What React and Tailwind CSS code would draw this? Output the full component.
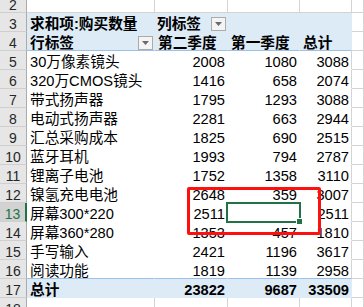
import React from "react";

const rows = [
  { n: 5, a: "30万像素镜头", b: "2008", c: "1080", d: "3088" },
  { n: 6, a: "320万CMOS镜头", b: "1416", c: "658", d: "2074" },
  { n: 7, a: "带式扬声器", b: "1795", c: "1293", d: "3088" },
  { n: 8, a: "电动式扬声器", b: "2281", c: "663", d: "2944" },
  { n: 9, a: "汇总采购成本", b: "1825", c: "690", d: "2515" },
  { n: 10, a: "蓝牙耳机", b: "1993", c: "794", d: "2787" },
  { n: 11, a: "锂离子电池", b: "1752", c: "1358", d: "3110" },
  { n: 12, a: "镍氢充电电池", b: "2648", c: "359", d: "3007" },
  { n: 13, a: "屏幕300*220", b: "2511", c: "", d: "2511" },
  { n: 14, a: "屏幕360*280", b: "1353", c: "457", d: "1810" },
  { n: 15, a: "手写输入", b: "2421", c: "1196", d: "3617" },
  { n: 16, a: "阅读功能", b: "1819", c: "1139", d: "2958" },
];

function RowHead({ n, selected }) {
  return (
    <div
      className={
        "w-[27px] h-[19px] shrink-0 border-b border-b-[#CFCFCF] text-center text-[14px] leading-[18px] pt-[2px] " +
        (selected
          ? "bg-[#D2D2D2] border-r-2 border-r-[#217346] text-[#217346]"
          : "bg-[#E6E6E6] border-r border-r-[#ABABAB] text-[#262626]")
      }
    >
      {n}
    </div>
  );
}

function Dropdown() {
  return (
    <div className="self-end w-[15px] h-[14px] border border-[#ABABAB] bg-[#F4F4F4] flex items-center justify-center">
      <svg width="7" height="4" viewBox="0 0 7 4">
        <path d="M0 0 H7 L3.5 4 Z" fill="#6A6A6A" />
      </svg>
    </div>
  );
}

const cellBase = "h-[19px] shrink-0 border-r border-b leading-[18px] pt-[2px] whitespace-nowrap";

function GridRow({ n }) {
  const g = "bg-white border-[#D4D4D4]";
  return (
    <div className="flex">
      <RowHead n={n} />
      <div className={`${cellBase} ${g} w-[128px]`} />
      <div className={`${cellBase} ${g} w-[73px]`} />
      <div className={`${cellBase} ${g} w-[72px]`} />
      <div className={`${cellBase} ${g} w-[52px]`} />
      <div className={`${cellBase} ${g} flex-1`} />
    </div>
  );
}

export default function App() {
  const hd = "bg-[#DDEBF7] border-[#DDEBF7] font-bold";
  const eCell = `${cellBase} bg-white border-[#D4D4D4] flex-1`;
  return (
    <div className="relative w-[364px] h-[307px] overflow-hidden bg-white text-black text-[14.67px] font-['Liberation_Sans','Noto_Sans_CJK_SC',sans-serif]">
      <div className="flex flex-col mt-[-6px]">
        <GridRow n={2} />

        {/* row 3 */}
        <div className="flex">
          <RowHead n={3} />
          <div className={`${cellBase} ${hd} w-[128px] pl-[3px]`}>求和项:购买数量</div>
          <div className={`${cellBase} ${hd} w-[73px] pl-[2px] pr-[1px] flex justify-between items-start`}>
            <span>列标签</span>
            <Dropdown />
          </div>
          <div className={`${cellBase} ${hd} w-[72px]`} />
          <div className={`${cellBase} ${hd} w-[52px]`} />
          <div className={eCell} />
        </div>

        {/* row 4 */}
        <div className="flex">
          <RowHead n={4} />
          <div className={`${cellBase} ${hd} border-b-[#9BC2E6] w-[128px] pl-[3px] pr-[1px] flex justify-between items-start`}>
            <span>行标签</span>
            <Dropdown />
          </div>
          <div className={`${cellBase} ${hd} border-b-[#9BC2E6] w-[73px] pl-[3px]`}>第二季度</div>
          <div className={`${cellBase} ${hd} border-b-[#9BC2E6] w-[72px] pl-[3px]`}>第一季度</div>
          <div className={`${cellBase} ${hd} border-b-[#9BC2E6] w-[52px] pl-[3px]`}>总计</div>
          <div className={eCell} />
        </div>

        {rows.map((r) => {
          const last = r.n === 16;
          const w = "bg-white border-white " + (last ? "border-b-[#9BC2E6]" : "");
          return (
            <div className="flex" key={r.n}>
              <RowHead n={r.n} selected={r.n === 13} />
              <div className={`${cellBase} ${w} w-[128px] pl-[3px]`}>{r.a}</div>
              <div className={`${cellBase} ${w} w-[73px] pr-[2px] text-right`}>{r.b}</div>
              <div className={`${cellBase} ${w} w-[72px] pr-[2px] text-right`}>{r.c}</div>
              <div className={`${cellBase} ${w} border-r-[#D4D4D4] w-[52px] pr-[2px] text-right`}>{r.d}</div>
              <div className={eCell} />
            </div>
          );
        })}

        {/* row 17 total */}
        <div className="flex">
          <RowHead n={17} />
          <div className={`${cellBase} ${hd} w-[128px] pl-[3px]`}>总计</div>
          <div className={`${cellBase} ${hd} w-[73px] pr-[2px] text-right`}>23822</div>
          <div className={`${cellBase} ${hd} w-[72px] pr-[2px] text-right`}>9687</div>
          <div className={`${cellBase} ${hd} w-[52px] pr-[2px] text-right`}>33509</div>
          <div className={eCell} />
        </div>

        <GridRow n={18} />
      </div>

      {/* active cell selection */}
      <div className="absolute left-[226px] top-[202px] w-[75px] h-[21px] border-2 border-[#217346]" />
      <div className="absolute left-[296px] top-[218px] w-[7px] h-[7px] bg-[#217346] border border-white" />

      {/* red annotation box */}
      <div className="absolute left-[187px] top-[187px] w-[134px] h-[48px] border-[3px] border-[#FF1010] rounded-[2px]" />
    </div>
  );
}
